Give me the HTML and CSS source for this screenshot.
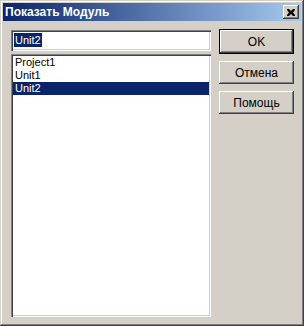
FILE: index.html
```html
<!doctype html>
<html lang="ru">
  <head>
    <meta charset="utf-8">
    <title>Показать Модуль</title>
    <link rel="stylesheet" href="styles.css">
  </head>
  <body>
    <div class="window">
      <div class="titlebar">
        <span class="title">Показать Модуль</span>
        <span class="close">
          <svg width="8" height="7" viewBox="0 0 8 7"><path d="M0 0h2l2 2l2-2h2v1l-2 2.5l2 2.5v1h-2l-2-2l-2 2h-2v-1l2-2.5l-2-2.5z" fill="#000"/></svg>
        </span>
      </div>
      <div class="client">
        <div class="left">
          <div class="edit"><span class="sel">Unit2</span></div>
          <div class="list">
            <div class="item">Project1</div>
            <div class="item">Unit1</div>
            <div class="item selected">Unit2</div>
          </div>
        </div>
        <div class="buttons">
          <div class="btn default"><span>OK</span></div>
          <div class="btn">Отмена</div>
          <div class="btn">Помощь</div>
        </div>
      </div>
    </div>
  </body>
</html>
```
FILE: styles.css
```css
* { box-sizing: border-box; }
body { margin: 0; font-family: "Liberation Sans", Arial, sans-serif; font-size: 11px; }
.window { width: 304px; height: 326px; background: #d4d0c8; padding: 3px; display: flex; flex-direction: column;
  box-shadow: inset -1px -1px 0 #404040, inset 1px 1px 0 #d4d0c8, inset -2px -2px 0 #808080, inset 2px 2px 0 #fff; }
.titlebar { height: 18px; display: flex; align-items: center; justify-content: space-between; padding: 0 2px 0 2px;
  background: linear-gradient(to right, #0a246a, #a6caf0); }
.title { color: #fff; font-weight: bold; font-size: 12px; }
.close { width: 16px; height: 14px; background: #d4d0c8; display: flex; align-items: center; justify-content: center;
  box-shadow: inset -1px -1px 0 #404040, inset 1px 1px 0 #fff, inset -2px -2px 0 #808080; }
.client { flex: 1; display: flex; padding: 8px 0 6px 8px; gap: 8px; }
.left { width: 200px; display: flex; flex-direction: column; }
.edit { height: 21px; margin-top: 1px; background: #fff; padding: 3px 2px 0 3px;
  box-shadow: inset 1px 1px 0 #808080, inset 2px 2px 0 #404040, inset -1px -1px 0 #fff, inset -2px -2px 0 #d4d0c8; }
.sel { background: #0a246a; color: #fff; display: inline-block; height: 14px; line-height: 14px; padding: 0 1px; }
.list { flex: 1; margin-top: 3px; background: #fff; padding: 2px;
  box-shadow: inset 1px 1px 0 #808080, inset 2px 2px 0 #404040, inset -1px -1px 0 #fff, inset -2px -2px 0 #d4d0c8; }
.item { height: 13px; line-height: 13px; padding-left: 2px; }
.item.selected { background: #0a246a; color: #fff; }
.buttons { width: 75px; display: flex; flex-direction: column; gap: 7px; }
.btn { height: 23px; display: flex; align-items: center; justify-content: center; background: #d4d0c8; font-size: 12px;
  box-shadow: inset -1px -1px 0 #404040, inset 1px 1px 0 #fff, inset -2px -2px 0 #808080; }
.btn.default { height: 25px; border: 1px solid #000; }
```
